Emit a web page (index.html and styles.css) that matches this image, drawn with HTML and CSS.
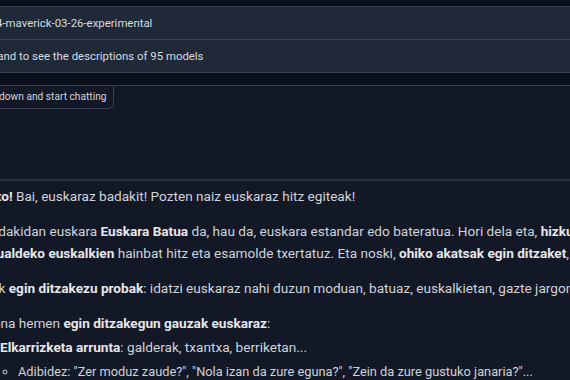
FILE: index.html
```html
<!DOCTYPE html>
<html>
<head>
<meta charset="utf-8">
<link rel="stylesheet" href="styles.css">
</head>
<body>
<div class="page">
  <div class="dropdown">
    <div class="row"><span class="row-text model">llama-4-maverick-03-26-experimental</span></div>
    <div class="row"><span class="row-text expand">👇 Expand to see the descriptions of 95 models</span></div>
  </div>
  <div class="panel">
    <div class="hint-wrap"><span class="hint">Scroll down and start chatting</span></div>
    <div class="chat">
      <div class="msg">
        <p class="p1"><b>Kaixo!</b> Bai, euskaraz badakit! Pozten naiz euskaraz hitz egiteak!</p>
        <p class="p2">Nik dakidan euskara <b>Euskara Batua</b> da, hau da, euskara estandar edo bateratua. Hori dela eta, <b>hizkuntza</b> arautua erabiltzen dut<br><b>eskualdeko euskalkien</b> hainbat hitz eta esamolde txertatuz. Eta noski, <b>ohiko akatsak egin ditzaket</b>, oraindik ikasten ari naiz</p>
        <p class="p3">Zuk <b>egin ditzakezu probak</b>: idatzi euskaraz nahi duzun moduan, batuaz, euskalkietan, gazte jargonaz... Nik</p>
        <p class="p4">Hona hemen <b>egin ditzakegun gauzak euskaraz</b>:</p>
        <ol class="list">
          <li><b>Elkarrizketa arrunta</b>: galderak, txantxa, berriketan...
            <ul class="sub">
              <li>Adibidez: "Zer moduz zaude?", "Nola izan da zure eguna?", "Zein da zure gustuko janaria?"...</li>
            </ul>
          </li>
        </ol>
      </div>
    </div>
  </div>
</div>
</body>
</html>
```

FILE: styles.css
```css
html, body {
  margin: 0;
  padding: 0;
  background: #0b0f19;
  overflow: hidden;
  width: 570px;
  height: 380px;
}
.page {
  font-family: Roboto, Lato, sans-serif;
  color: #d1d5db;
  padding-top: 6px;
}
.dropdown {
  border-top: 1px solid #374151;
  border-bottom: 1px solid #374151;
  background: #202938;
  margin-bottom: 12px;
}
.row {
  height: 32px;
  display: flex;
  align-items: center;
  white-space: nowrap;
  font-size: 11.4px;
  color: #d7dbe2;
  overflow: hidden;
}
.row + .row {
  border-top: 1px solid #374151;
}
.row-text.model {
  margin-left: -35px;
}
.row-text.expand {
  margin-left: -38px;
}
.panel {
  border-top: 1px solid #374151;
  background: #121826;
  height: 400px;
}
.hint-wrap {
  display: flex;
  white-space: nowrap;
  overflow: hidden;
}
.hint {
  display: block;
  margin-left: -30px;
  padding: 4px 6px 5px 0;
  font-size: 10.2px;
  line-height: 13px;
  color: #d1d5db;
  border: 1px solid #374151;
  border-top: none;
  border-radius: 0 0 6px 0;
}
.chat {
  margin-top: 70px;
  border-top: 2px solid #273040;
}
.msg {
  white-space: nowrap;
  margin-left: -25px;
  font-size: 13.6px;
  line-height: 22px;
  color: #cfd3da;
  padding-top: 4px;
}
.msg b {
  color: #e5e7eb;
  font-weight: 700;
}
.msg p {
  margin: 0 0 13px 0;
}
.msg p.p3,
.msg p.p4 {
  text-indent: 8px;
}
.msg p.p4 {
  margin-bottom: 2px;
}
.list {
  margin: 0;
  padding-left: 25px;
}
.list > li {
  line-height: 22px;
}
.sub {
  list-style: circle;
  margin: 3px 0 0 0;
  padding-left: 18px;
}
.sub li {
  font-size: 12.8px;
  line-height: 22px;
}
```
